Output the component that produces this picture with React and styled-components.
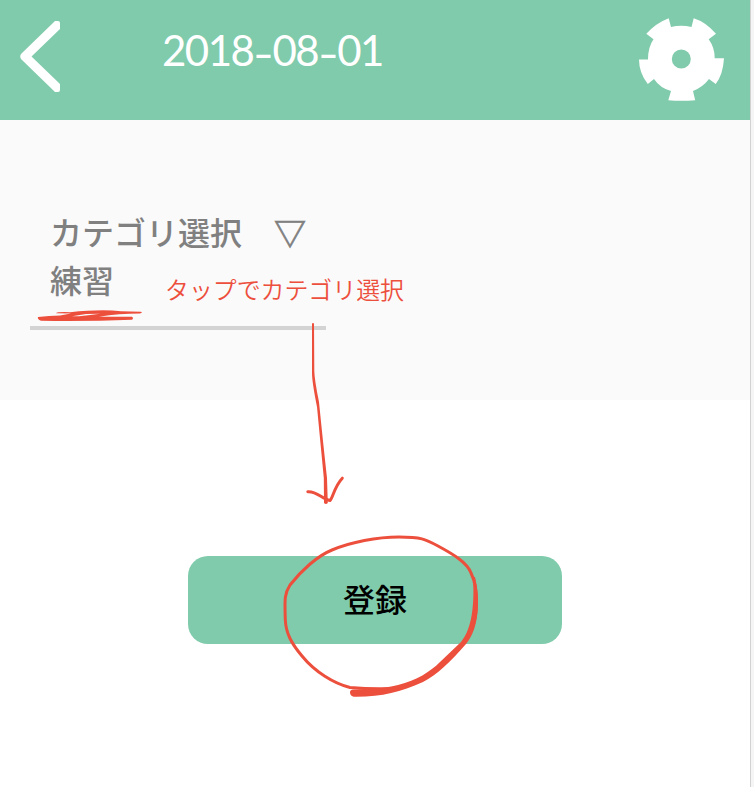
import React from 'react';
import styled, { createGlobalStyle } from 'styled-components';

const GlobalStyle = createGlobalStyle`
  *, *::before, *::after { box-sizing: border-box; }
  body { margin: 0; background: #fff; overflow: hidden; }
`;

const Page = styled.div`
  position: relative;
  display: flex;
  width: 754px;
  height: 787px;
  background: #f5f5f5;
  font-family: "Noto Sans CJK JP", sans-serif;
`;

const Screen = styled.main`
  width: 751px;
  border-right: 1px solid #d2d2d2;
  background: #fff;
`;

const Header = styled.header`
  display: flex;
  align-items: flex-start;
  height: 120px;
  background: #80cbac;
`;

const IconButton = styled.button`
  display: flex;
  flex: none;
  margin: ${({ $margin }) => $margin};
  padding: 0;
  border: 0;
  background: none;
`;

const DateTitle = styled.h1`
  flex: 1;
  margin: 24px 0 0 100px;
  color: #fff;
  font: 400 42px/52px Lato, sans-serif;
  letter-spacing: -1.5px;
  white-space: nowrap;
`;

const Dash = styled.span`
  display: inline-block;
  width: 19px;
  text-align: center;
  letter-spacing: 0;
  transform: translate(1px, 3px) scaleX(1.35);
`;

const CategoryPanel = styled.section`
  height: 280px;
  padding: 87px 0 0 30px;
  background: #fafafa;
`;

const CategoryField = styled.div`
  width: 296px;
  height: 123px;
  padding: 0 0 0 20px;
  border-bottom: 4px solid #d3d3d3;
  color: #808080;
  font-size: 32px;
  font-weight: 500;
  line-height: 48px;
  white-space: nowrap;
`;

const FieldLabel = styled.div`
  display: flex;
  align-items: center;
  gap: 32px;
  height: 48px;
`;

const Triangle = styled.span`
  -webkit-text-stroke: 0.7px #808080;
`;

const FieldValue = styled.div`
  height: 48px;
`;

const Actions = styled.section`
  display: flex;
  justify-content: center;
  padding-top: 156px;
`;

const RegisterButton = styled.button`
  width: 374px;
  height: 88px;
  padding: 0 0 4px;
  border: 0;
  border-radius: 20px;
  background: #80cbac;
  color: #000;
  font: 500 32px/84px "Noto Sans CJK JP", sans-serif;
`;

const Note = styled.p`
  position: absolute;
  top: 271px;
  left: 165px;
  margin: 0;
  color: #ed4f3d;
  font-size: 23.9px;
  font-weight: 350;
  line-height: 36px;
  white-space: nowrap;
`;

const Markup = styled.svg`
  position: absolute;
  inset: 0;
  pointer-events: none;
`;

function BackIcon() {
  return (
    <svg width="42" height="74" viewBox="20 20 42 74">
      <path d="M55 21H58Q60 21 60 23V29L31.5 56.5L60 84V90Q60 92 58 92H55L21 59Q19.5 56.5 21 54Z" fill="#fff" />
    </svg>
  );
}

function GearIcon() {
  return (
    <svg width="86" height="84" viewBox="639 18 86 84">
      <path
        fill="#fff"
        fillRule="evenodd"
        d="M671 27L668.7 18.2Q656 23 646.3 33.8L653.5 39.2Q648 47 648 59.5H639Q639 73 647.8 84L654 79Q660 88 671 91L668.3 100.3Q681 101.3 695.2 100.3L693 91Q703 87 709 79L715.7 84Q723 75 724 58.3H714.7Q715 48 708.7 39.2L716 33.8Q706 22 693.7 18.2L691.5 27Q681 24.5 671 27ZM690.8 59A9.5 9.5 0 1 0 671.8 59A9.5 9.5 0 1 0 690.8 59Z"
      />
    </svg>
  );
}

function HandDrawnMarks() {
  return (
    <Markup width="754" height="787" viewBox="0 0 754 787" fill="#ed4f3d">
      <path d="M38 317Q49 315.7 60 315.5L71 313.6L56 313.3Q56 311.8 70 312.2Q101 309 121 311.2L141 311.8Q143 312.8 140 313.5Q119 313.5 99 316.8L132 316.8Q134 318 132 319.8Q87 321.5 41 320.8Q37 319 38 317ZM72 316.2H79Q91 315 100 313.8L86 313.9Z" fillRule="evenodd" />
      <path d="M312 323.5Q313 322.5 314 323.5L314.3 371Q314.5 380 319 402Q323 442 327 478L327.8 503Q326 505 324 503L323.8 478L317 407Q312 382 312 373Z" />
      <path d="M307.8 491.7C317 491 322 499 330 500.5C333 498 334 487 342.3 478.2" fill="none" stroke="#ed4f3d" strokeWidth="3" strokeLinecap="round" strokeLinejoin="round" />
      <path
        d="M390 688.5C375 689 363 688.5 350 687.5C334 683.5 315 672 302 656C291 643 286 633 285.3 620C284.8 601 284 594 290 585C301 571 317 556 332 550C351 542 377 537 399 537C421 537 425 539 438 546C451 553 467 562 471 573C476 583 476.8 593 476.5 604C476 621 471 635 463 643.5"
        fill="none" stroke="#ed4f3d" strokeWidth="3" strokeLinecap="round"
      />
      <path d="M473 577L475 577C480.5 600 479 629 466 644C451 661 437 675 423 682C400 692 382 697 355 696.8C351 696.8 350 694 350 692C350 690 352 689.5 355 689.5C369 689 383 689 398 685C417 680 430 672 440 662L461 642C470 631 475 612 473 577Z" />
    </Markup>
  );
}

export default function App() {
  return (
    <>
      <GlobalStyle />
      <Page>
        <Screen>
          <Header>
            <IconButton type="button" aria-label="戻る" $margin="20px 0 0 20px">
              <BackIcon />
            </IconButton>
            <DateTitle>2018<Dash>-</Dash>08<Dash>-</Dash>01</DateTitle>
            <IconButton type="button" aria-label="設定" $margin="18px 25px 0 0">
              <GearIcon />
            </IconButton>
          </Header>
          <CategoryPanel>
            <CategoryField>
              <FieldLabel>
                カテゴリ選択
                <Triangle>▽</Triangle>
              </FieldLabel>
              <FieldValue>練習</FieldValue>
            </CategoryField>
          </CategoryPanel>
          <Actions>
            <RegisterButton type="button">登録</RegisterButton>
          </Actions>
        </Screen>
        <Note>タップでカテゴリ選択</Note>
        <HandDrawnMarks />
      </Page>
    </>
  );
}
